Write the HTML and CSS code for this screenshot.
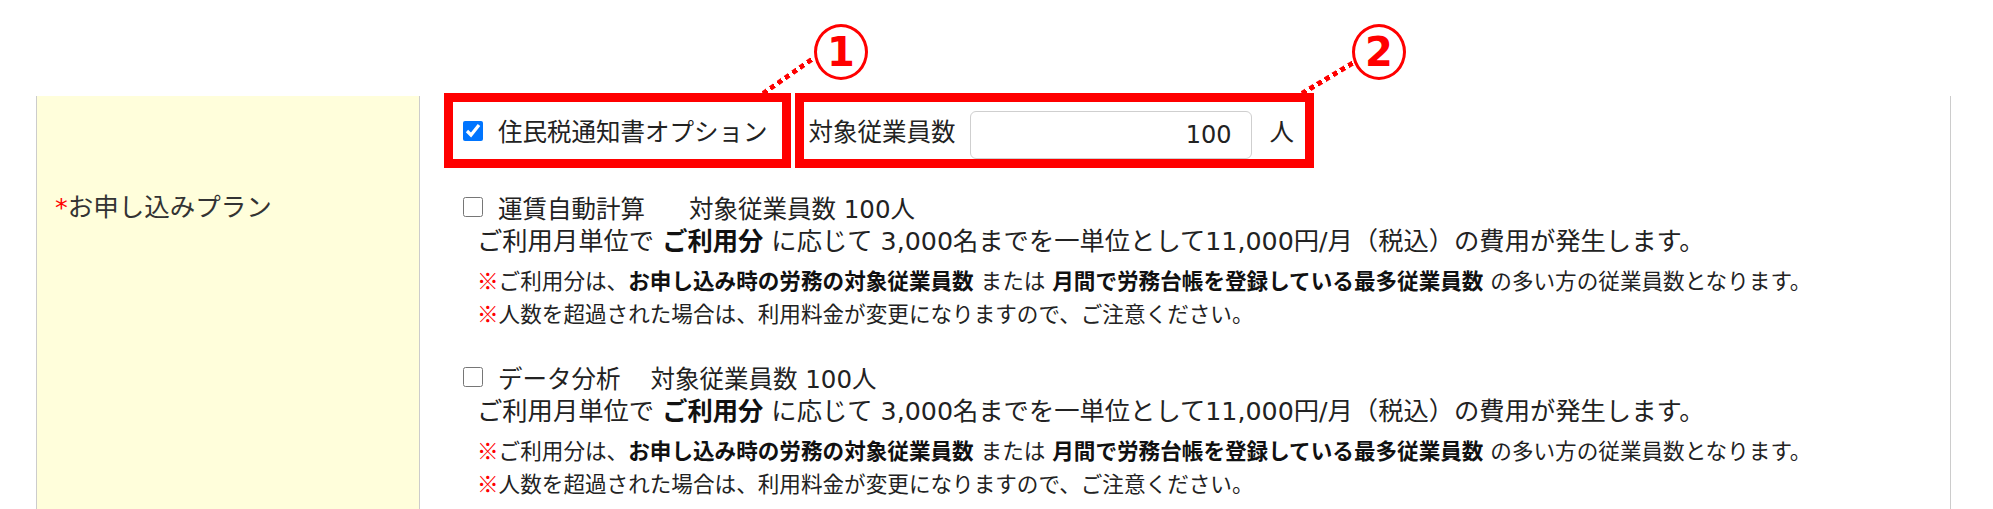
FILE: index.html
```html
<!DOCTYPE html>
<html lang="ja">
<head>
<meta charset="utf-8">
<title>お申し込みプラン</title>
<link rel="stylesheet" href="styles.css">
</head>
<body>
<div class="canvas">
  <span class="circ circ1">1</span>
  <span class="dots dots1"></span>
  <span class="circ circ2">2</span>
  <span class="dots dots2"></span>

  <div class="form">
    <div class="th"><span class="req">*</span>お申し込みプラン</div>
    <div class="td">
      <div class="opt-row">
        <label class="mark mark1"><input type="checkbox" checked><span class="opt-name">住民税通知書オプション</span></label>
        <div class="mark mark2"><span>対象従業員数</span><input class="num" type="text" value="100"><span class="unit">人</span></div>
      </div>

      <div class="plan">
        <label class="plan-head"><input type="checkbox"><span class="plan-name w1">運賃自動計算</span><span>対象従業員数 100人</span></label>
        <p class="plan-main">ご利用月単位で <b>ご利用分</b> に応じて 3,000名までを一単位として11,000円/月（税込）の費用が発生します。</p>
        <p class="note"><span class="kome">※</span>ご利用分は、<b>お申し込み時の労務の対象従業員数</b> または <b>月間で労務台帳を登録している最多従業員数</b> の多い方の従業員数となります。</p>
        <p class="note"><span class="kome">※</span>人数を超過された場合は、利用料金が変更になりますので、ご注意ください。</p>
      </div>

      <div class="plan plan2">
        <label class="plan-head"><input type="checkbox"><span class="plan-name w2">データ分析</span><span>対象従業員数 100人</span></label>
        <p class="plan-main">ご利用月単位で <b>ご利用分</b> に応じて 3,000名までを一単位として11,000円/月（税込）の費用が発生します。</p>
        <p class="note"><span class="kome">※</span>ご利用分は、<b>お申し込み時の労務の対象従業員数</b> または <b>月間で労務台帳を登録している最多従業員数</b> の多い方の従業員数となります。</p>
        <p class="note"><span class="kome">※</span>人数を超過された場合は、利用料金が変更になりますので、ご注意ください。</p>
      </div>
    </div>
  </div>
</div>
</body>
</html>
```
FILE: styles.css
```css
html, body {
  margin: 0;
  padding: 0;
  background: #ffffff;
}
body {
  font-family: "DejaVu Sans", "Noto Sans CJK JP", sans-serif;
  color: #222222;
}
.canvas {
  position: relative;
  width: 1993px;
  height: 509px;
  overflow: hidden;
  padding-top: 96px;
  box-sizing: border-box;
}
.form {
  display: grid;
  grid-template-columns: 383px 1fr;
  margin-left: 36px;
  width: 1915px;
  height: 413px;
  box-sizing: border-box;
  border-left: 1px solid #cccccc;
  border-right: 1px solid #cccccc;
}
.th {
  background: #fffedb;
  border-right: 1px solid #cccccc;
  box-sizing: border-box;
  padding: 93px 0 0 18px;
  font-size: 25.5px;
  line-height: 36px;
  color: #333333;
}
.req {
  color: #ff0000;
}
.td {
  padding-left: 24px;
}
.opt-row {
  display: flex;
  margin-top: -3px;
}
.mark {
  display: flex;
  align-items: center;
  height: 75px;
  box-sizing: border-box;
  border: 9px solid #ff0000;
  font-size: 24.5px;
}
.mark1 {
  padding: 0 14px 0 10px;
}
.mark1 input {
  width: 20px;
  height: 20px;
  margin: 0 15px 0 0;
}
.mark2 {
  margin-left: 4px;
  padding: 0 11px 0 5px;
}
.num {
  align-self: flex-end;
  width: 282px;
  height: 48px;
  box-sizing: border-box;
  margin: 0 0 0 14px;
  padding: 0 19px 0 0;
  border: 1px solid #cfcfcf;
  border-radius: 6px;
  font-family: "DejaVu Sans", "Noto Sans CJK JP", sans-serif;
  font-size: 24px;
  color: #222222;
  text-align: right;
  background: #ffffff;
}
.unit {
  margin-left: 18px;
}
.plan {
  margin: 21px 0 0 19px;
}
.plan2 {
  margin-top: 29px;
}
.plan-head {
  display: flex;
  align-items: center;
  height: 36px;
  font-size: 24.5px;
}
.plan-head input {
  width: 20px;
  height: 20px;
  margin: 0 15px 0 0;
}
.plan-name.w1 {
  margin-right: 44px;
}
.plan-name.w2 {
  margin-right: 30px;
}
.plan-main {
  margin: 0 0 0 14px;
  font-size: 25.3px;
  line-height: 34px;
}
.plan-main b, .note b {
  font-weight: 700;
  color: #111111;
}
.note {
  margin: 0 0 0 14px;
  font-size: 21.6px;
  line-height: 31px;
}
.plan-main + .note {
  margin-top: 5px;
}
.kome {
  color: #ff0000;
  font-family: "Noto Sans CJK JP", sans-serif;
  font-weight: 700;
}
.circ {
  position: absolute;
  top: 24px;
  width: 54px;
  height: 56px;
  box-sizing: border-box;
  border: 3px solid #ff0000;
  border-radius: 50%;
  color: #ff0000;
  font-family: "DejaVu Sans", sans-serif;
  font-weight: 700;
  font-size: 40px;
  line-height: 50px;
  text-align: center;
}
.circ1 {
  left: 814px;
}
.circ2 {
  left: 1352px;
}
.dots {
  position: absolute;
  height: 5px;
  background: repeating-linear-gradient(90deg, #ff0000 0 5px, transparent 5px 9px);
  transform-origin: 0 50%;
}
.dots1 {
  left: 763px;
  top: 91px;
  width: 62px;
  transform: rotate(-35deg);
}
.dots2 {
  left: 1302px;
  top: 91px;
  width: 63px;
  transform: rotate(-31deg);
}
```
